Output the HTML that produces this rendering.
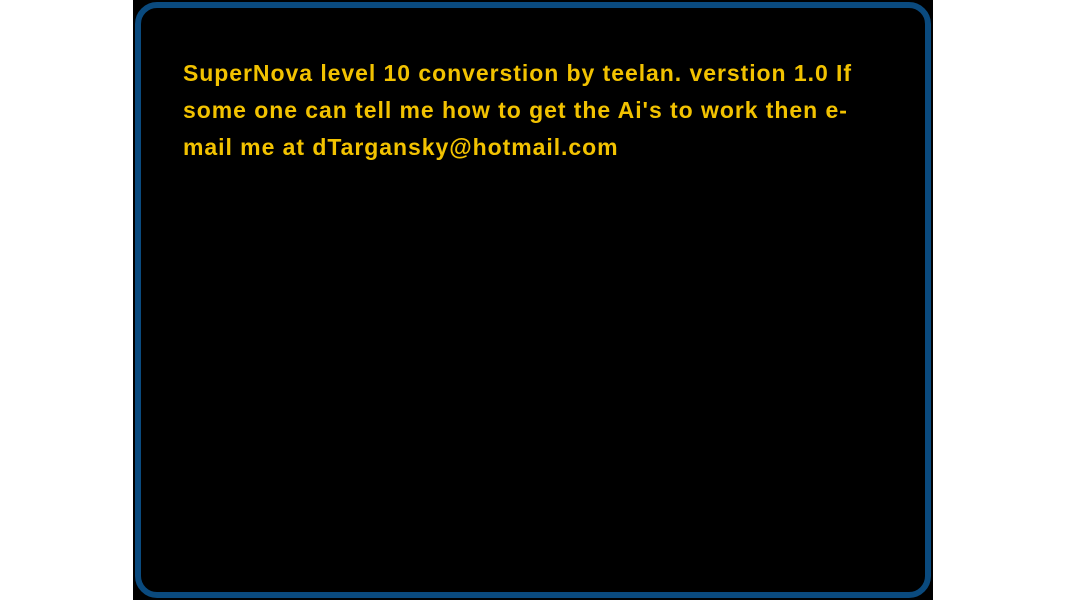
<!DOCTYPE html>
<html><head><style>
html,body{margin:0;padding:0;background:#fff;width:1067px;height:600px;overflow:hidden}
.bg{position:absolute;left:133px;top:0;width:800px;height:600px;background:#000}
.frame{position:absolute;left:135px;top:2px;width:784px;height:584px;border:6px solid #0a4a7e;border-radius:22px}
.t{position:absolute;left:183px;top:55px;color:#f2c200;font-family:"Liberation Sans",sans-serif;font-weight:bold;font-size:23px;line-height:37px;white-space:nowrap;letter-spacing:0.95px}
</style></head><body>
<div class="bg"></div><div class="frame"></div>
<div class="t">SuperNova level 10 converstion by teelan. verstion 1.0 If<br>some one can tell me how to get the Ai's to work then e-<br>mail me at dTargansky@hotmail.com</div>
</body></html>
